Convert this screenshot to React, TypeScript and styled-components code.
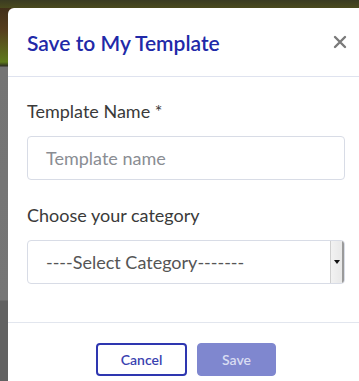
import React from 'react';
import styled, { createGlobalStyle } from 'styled-components';

const GlobalStyle = createGlobalStyle`
  html, body {
    margin:0;
    padding:0;
    overflow:hidden;
    height:381px;
  }
  body {
    font-family:"Lato","Noto Sans",sans-serif;
    background:#6f6f6f;
  }
`;

const Backdrop = styled.div`
  height:381px;
  padding:8px 0 0 8px;
  box-sizing:border-box;
  display:flex;
  background:
    linear-gradient(180deg, #3a3b22 0px, #4a4a1e 8px, transparent 8px),
    linear-gradient(180deg, #3b2a18 0px, #553d1d 30px, #5e7a1c 62px, #2e2e22 66px, #747474 67px, #767676 300px, #626262 301px);
`;

const Modal = styled.div`
  width:356px;
  flex-shrink:0;
  background:#fff;
  border-radius:6px 6px 0 0;
  display:flex;
  flex-direction:column;
  overflow:hidden;
`;

const Header = styled.div`
  height:69px;
  flex-shrink:0;
  box-sizing:border-box;
  padding:0 19px;
  display:flex;
  align-items:center;
  justify-content:space-between;
  border-bottom:1px solid #dfe3ef;
`;

const Title = styled.h2`
  margin:0;
  font-size:21px;
  font-weight:600;
  color:#2129a8;
`;

const Close = styled.button`
  border:none;
  background:none;
  padding:0;
  margin-right:-2px;
  color:#7a7a7a;
  display:flex;
`;

const Body = styled.div`
  padding:23px 19px 38px;
  display:flex;
  flex-direction:column;
  gap:24px;
  border-bottom:1px solid #e2e6ee;
`;

const Group = styled.div`
  display:flex;
  flex-direction:column;
  gap:14px;
`;

const Label = styled.label`
  font-size:18px;
  line-height:22px;
  color:#3a3a3a;
`;

const Field = styled.div`
  height:44px;
  box-sizing:border-box;
  border:1px solid #d8dce6;
  border-radius:4px;
  display:flex;
  align-items:center;
  padding-left:18px;
  font-size:18px;
  color:#8a8d93;
`;

const SelectBox = styled(Field)`
  color:#555;
  justify-content:space-between;
  overflow:hidden;
`;

const Arrow = styled.span`
  width:11px;
  align-self:stretch;
  background:linear-gradient(90deg,#f2f2f2,#e8e8e8);
  border-left:1px solid #cfcfcf;
  border-right:2px solid #9a9a9a;
  display:flex;
  align-items:center;
  justify-content:center;
  &::after {
    content:'';
    border-left:3px solid transparent;
    border-right:3px solid transparent;
    border-top:4px solid #111;
  }
`;

const Footer = styled.div`
  display:flex;
  justify-content:center;
  gap:10px;
  padding-top:20px;
`;

const Button = styled.button<{ $primary?: boolean }>`
  height:33px;
  box-sizing:border-box;
  border-radius:4px;
  font-family:inherit;
  font-size:14px;
  font-weight:600;
  padding:0;
  width:${p => (p.$primary ? '79px' : '91px')};
  border:${p => (p.$primary ? '1px solid #7f87cf' : '2px solid #2e36b0')};
  background:${p => (p.$primary ? '#7f87cf' : '#fff')};
  color:${p => (p.$primary ? '#d9dcf2' : '#3a42b0')};
`;

export default function App() {
  return (
    <>
      <GlobalStyle />
      <Backdrop>
        <Modal>
          <Header>
            <Title>Save to My Template</Title>
            <Close aria-label="close">
              <svg width="14" height="14" viewBox="0 0 14 14">
                <path d="M2 2 L12 12 M12 2 L2 12" stroke="currentColor" strokeWidth="2.4" strokeLinecap="round" />
              </svg>
            </Close>
          </Header>
          <Body>
            <Group>
              <Label>Template Name *</Label>
              <Field>Template name</Field>
            </Group>
            <Group>
              <Label>Choose your category</Label>
              <SelectBox>
                ----Select Category-------
                <Arrow />
              </SelectBox>
            </Group>
          </Body>
          <Footer>
            <Button>Cancel</Button>
            <Button $primary>Save</Button>
          </Footer>
        </Modal>
      </Backdrop>
    </>
  );
}
